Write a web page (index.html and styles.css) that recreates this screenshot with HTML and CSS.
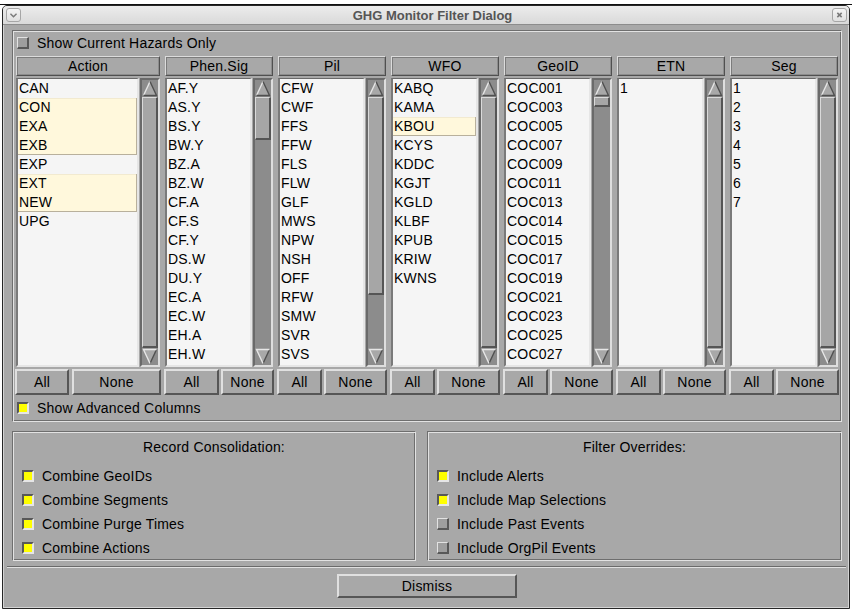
FILE: index.html
```html
<!DOCTYPE html>
<html>
<head>
<meta charset="utf-8">
<title>GHG Monitor Filter Dialog</title>
<link rel="stylesheet" href="styles.css">
</head>
<body>
<div class="screen-top"></div>
<div class="window">
  <div class="titlebar">
    <span class="tb-btn"><svg width="15" height="14" viewBox="0 0 15 14"><polyline points="4,5.5 7.5,9 11,5.5" fill="none" stroke="#7a7a7a" stroke-width="1.6"/></svg></span>
    <span class="title">GHG Monitor Filter Dialog</span>
    <span class="tb-btn"><svg width="15" height="14" viewBox="0 0 15 14"><path d="M5 4.5 L10 9.5 M10 4.5 L5 9.5" stroke="#7a7a7a" stroke-width="1.8"/></svg></span>
  </div>
  <div class="body">
    <div class="frame main-frame">
      <div class="check-row"><span class="cb"></span><span>Show Current Hazards Only</span></div>
      <div class="columns">
        <div class="col col-wide">
          <div class="col-head">Action</div>
          <div class="col-list">
            <div class="listbox">
              <div class="row">CAN</div>
              <div class="selgroup"><div class="row">CON</div><div class="row">EXA</div><div class="row">EXB</div></div>
              <div class="row">EXP</div>
              <div class="selgroup"><div class="row">EXT</div><div class="row">NEW</div></div>
              <div class="row">UPG</div>
            </div>
            <div class="scrollbar">
              <svg class="arrow" width="16" height="17" viewBox="0 0 16 17"><polygon points="8,1.5 14.5,15.5 1.5,15.5" fill="#a8a8a8"/><polyline points="1.5,15.5 8,1.5" fill="none" stroke="#e6e6e6" stroke-width="1.4"/><polyline points="8,1.5 14.5,15.5 1.5,15.5" fill="none" stroke="#505050" stroke-width="1.4"/></svg>
              <div class="trough"><div class="thumb full"></div></div>
              <svg class="arrow" width="16" height="17" viewBox="0 0 16 17"><polygon points="1.5,1.5 14.5,1.5 8,15.5" fill="#a8a8a8"/><polyline points="8,15.5 14.5,1.5" fill="none" stroke="#505050" stroke-width="1.4"/><polyline points="8,15.5 1.5,1.5 14.5,1.5" fill="none" stroke="#e6e6e6" stroke-width="1.4"/></svg>
            </div>
          </div>
          <div class="col-btns btns-wide"><button class="btn">All</button><button class="btn">None</button></div>
        </div>

        <div class="col">
          <div class="col-head">Phen.Sig</div>
          <div class="col-list">
            <div class="listbox">
              <div class="row">AF.Y</div><div class="row">AS.Y</div><div class="row">BS.Y</div><div class="row">BW.Y</div><div class="row">BZ.A</div><div class="row">BZ.W</div><div class="row">CF.A</div><div class="row">CF.S</div><div class="row">CF.Y</div><div class="row">DS.W</div><div class="row">DU.Y</div><div class="row">EC.A</div><div class="row">EC.W</div><div class="row">EH.A</div><div class="row">EH.W</div>
            </div>
            <div class="scrollbar">
              <svg class="arrow" width="16" height="17" viewBox="0 0 16 17"><polygon points="8,1.5 14.5,15.5 1.5,15.5" fill="#a8a8a8"/><polyline points="1.5,15.5 8,1.5" fill="none" stroke="#e6e6e6" stroke-width="1.4"/><polyline points="8,1.5 14.5,15.5 1.5,15.5" fill="none" stroke="#505050" stroke-width="1.4"/></svg>
              <div class="trough"><div class="thumb" style="height:43px"></div></div>
              <svg class="arrow" width="16" height="17" viewBox="0 0 16 17"><polygon points="1.5,1.5 14.5,1.5 8,15.5" fill="#a8a8a8"/><polyline points="8,15.5 14.5,1.5" fill="none" stroke="#505050" stroke-width="1.4"/><polyline points="8,15.5 1.5,1.5 14.5,1.5" fill="none" stroke="#e6e6e6" stroke-width="1.4"/></svg>
            </div>
          </div>
          <div class="col-btns btns-even"><button class="btn">All</button><button class="btn">None</button></div>
        </div>

        <div class="col">
          <div class="col-head">Pil</div>
          <div class="col-list">
            <div class="listbox">
              <div class="row">CFW</div><div class="row">CWF</div><div class="row">FFS</div><div class="row">FFW</div><div class="row">FLS</div><div class="row">FLW</div><div class="row">GLF</div><div class="row">MWS</div><div class="row">NPW</div><div class="row">NSH</div><div class="row">OFF</div><div class="row">RFW</div><div class="row">SMW</div><div class="row">SVR</div><div class="row">SVS</div>
            </div>
            <div class="scrollbar">
              <svg class="arrow" width="16" height="17" viewBox="0 0 16 17"><polygon points="8,1.5 14.5,15.5 1.5,15.5" fill="#a8a8a8"/><polyline points="1.5,15.5 8,1.5" fill="none" stroke="#e6e6e6" stroke-width="1.4"/><polyline points="8,1.5 14.5,15.5 1.5,15.5" fill="none" stroke="#505050" stroke-width="1.4"/></svg>
              <div class="trough"><div class="thumb" style="height:198px"></div></div>
              <svg class="arrow" width="16" height="17" viewBox="0 0 16 17"><polygon points="1.5,1.5 14.5,1.5 8,15.5" fill="#a8a8a8"/><polyline points="8,15.5 14.5,1.5" fill="none" stroke="#505050" stroke-width="1.4"/><polyline points="8,15.5 1.5,1.5 14.5,1.5" fill="none" stroke="#e6e6e6" stroke-width="1.4"/></svg>
            </div>
          </div>
          <div class="col-btns"><button class="btn">All</button><button class="btn">None</button></div>
        </div>

        <div class="col">
          <div class="col-head">WFO</div>
          <div class="col-list">
            <div class="listbox">
              <div class="row">KABQ</div><div class="row">KAMA</div>
              <div class="selgroup"><div class="row">KBOU</div></div>
              <div class="row">KCYS</div><div class="row">KDDC</div><div class="row">KGJT</div><div class="row">KGLD</div><div class="row">KLBF</div><div class="row">KPUB</div><div class="row">KRIW</div><div class="row">KWNS</div>
            </div>
            <div class="scrollbar">
              <svg class="arrow" width="16" height="17" viewBox="0 0 16 17"><polygon points="8,1.5 14.5,15.5 1.5,15.5" fill="#a8a8a8"/><polyline points="1.5,15.5 8,1.5" fill="none" stroke="#e6e6e6" stroke-width="1.4"/><polyline points="8,1.5 14.5,15.5 1.5,15.5" fill="none" stroke="#505050" stroke-width="1.4"/></svg>
              <div class="trough"><div class="thumb full"></div></div>
              <svg class="arrow" width="16" height="17" viewBox="0 0 16 17"><polygon points="1.5,1.5 14.5,1.5 8,15.5" fill="#a8a8a8"/><polyline points="8,15.5 14.5,1.5" fill="none" stroke="#505050" stroke-width="1.4"/><polyline points="8,15.5 1.5,1.5 14.5,1.5" fill="none" stroke="#e6e6e6" stroke-width="1.4"/></svg>
            </div>
          </div>
          <div class="col-btns"><button class="btn">All</button><button class="btn">None</button></div>
        </div>

        <div class="col">
          <div class="col-head">GeoID</div>
          <div class="col-list">
            <div class="listbox">
              <div class="row">COC001</div><div class="row">COC003</div><div class="row">COC005</div><div class="row">COC007</div><div class="row">COC009</div><div class="row">COC011</div><div class="row">COC013</div><div class="row">COC014</div><div class="row">COC015</div><div class="row">COC017</div><div class="row">COC019</div><div class="row">COC021</div><div class="row">COC023</div><div class="row">COC025</div><div class="row">COC027</div>
            </div>
            <div class="scrollbar">
              <svg class="arrow" width="16" height="17" viewBox="0 0 16 17"><polygon points="8,1.5 14.5,15.5 1.5,15.5" fill="#a8a8a8"/><polyline points="1.5,15.5 8,1.5" fill="none" stroke="#e6e6e6" stroke-width="1.4"/><polyline points="8,1.5 14.5,15.5 1.5,15.5" fill="none" stroke="#505050" stroke-width="1.4"/></svg>
              <div class="trough"><div class="thumb" style="height:10px"></div></div>
              <svg class="arrow" width="16" height="17" viewBox="0 0 16 17"><polygon points="1.5,1.5 14.5,1.5 8,15.5" fill="#a8a8a8"/><polyline points="8,15.5 14.5,1.5" fill="none" stroke="#505050" stroke-width="1.4"/><polyline points="8,15.5 1.5,1.5 14.5,1.5" fill="none" stroke="#e6e6e6" stroke-width="1.4"/></svg>
            </div>
          </div>
          <div class="col-btns"><button class="btn">All</button><button class="btn">None</button></div>
        </div>

        <div class="col">
          <div class="col-head">ETN</div>
          <div class="col-list">
            <div class="listbox">
              <div class="row">1</div>
            </div>
            <div class="scrollbar">
              <svg class="arrow" width="16" height="17" viewBox="0 0 16 17"><polygon points="8,1.5 14.5,15.5 1.5,15.5" fill="#a8a8a8"/><polyline points="1.5,15.5 8,1.5" fill="none" stroke="#e6e6e6" stroke-width="1.4"/><polyline points="8,1.5 14.5,15.5 1.5,15.5" fill="none" stroke="#505050" stroke-width="1.4"/></svg>
              <div class="trough"><div class="thumb full"></div></div>
              <svg class="arrow" width="16" height="17" viewBox="0 0 16 17"><polygon points="1.5,1.5 14.5,1.5 8,15.5" fill="#a8a8a8"/><polyline points="8,15.5 14.5,1.5" fill="none" stroke="#505050" stroke-width="1.4"/><polyline points="8,15.5 1.5,1.5 14.5,1.5" fill="none" stroke="#e6e6e6" stroke-width="1.4"/></svg>
            </div>
          </div>
          <div class="col-btns"><button class="btn">All</button><button class="btn">None</button></div>
        </div>

        <div class="col">
          <div class="col-head">Seg</div>
          <div class="col-list">
            <div class="listbox">
              <div class="row">1</div><div class="row">2</div><div class="row">3</div><div class="row">4</div><div class="row">5</div><div class="row">6</div><div class="row">7</div>
            </div>
            <div class="scrollbar">
              <svg class="arrow" width="16" height="17" viewBox="0 0 16 17"><polygon points="8,1.5 14.5,15.5 1.5,15.5" fill="#a8a8a8"/><polyline points="1.5,15.5 8,1.5" fill="none" stroke="#e6e6e6" stroke-width="1.4"/><polyline points="8,1.5 14.5,15.5 1.5,15.5" fill="none" stroke="#505050" stroke-width="1.4"/></svg>
              <div class="trough"><div class="thumb full"></div></div>
              <svg class="arrow" width="16" height="17" viewBox="0 0 16 17"><polygon points="1.5,1.5 14.5,1.5 8,15.5" fill="#a8a8a8"/><polyline points="8,15.5 14.5,1.5" fill="none" stroke="#505050" stroke-width="1.4"/><polyline points="8,15.5 1.5,1.5 14.5,1.5" fill="none" stroke="#e6e6e6" stroke-width="1.4"/></svg>
            </div>
          </div>
          <div class="col-btns"><button class="btn">All</button><button class="btn">None</button></div>
        </div>
      </div>
      <div class="check-row adv-row"><span class="cb on"></span><span>Show Advanced Columns</span></div>
    </div>

    <div class="panels">
      <div class="frame panel panel-left">
        <div class="panel-title">Record Consolidation:</div>
        <div class="opt"><span class="cb on"></span><span>Combine GeoIDs</span></div>
        <div class="opt"><span class="cb on"></span><span>Combine Segments</span></div>
        <div class="opt"><span class="cb on"></span><span>Combine Purge Times</span></div>
        <div class="opt"><span class="cb on"></span><span>Combine Actions</span></div>
      </div>
      <div class="frame panel panel-right">
        <div class="panel-title">Filter Overrides:</div>
        <div class="opt"><span class="cb on"></span><span>Include Alerts</span></div>
        <div class="opt"><span class="cb on"></span><span>Include Map Selections</span></div>
        <div class="opt"><span class="cb"></span><span>Include Past Events</span></div>
        <div class="opt"><span class="cb"></span><span>Include OrgPil Events</span></div>
      </div>
    </div>

    <div class="separator"></div>
    <div class="footer"><button class="btn dismiss">Dismiss</button></div>
  </div>
</div>
</body>
</html>
```

FILE: styles.css
```css
* { box-sizing: border-box; }

html, body {
  margin: 0;
  padding: 0;
}

body {
  width: 852px;
  height: 610px;
  overflow: hidden;
  background: #ffffff;
  font-family: "Liberation Sans", Arial, sans-serif;
  font-size: 14px;
  letter-spacing: 0.2px;
  color: #000;
}

.screen-top {
  height: 5px;
  background: #ffffff;
  border-bottom: 1px solid #111;
}

.window {
  margin-left: 2px;
  width: 848px;
  height: 604px;
  border: 1px solid #262626;
  border-radius: 5px 5px 0 0;
  background: #a8a8a8;
  display: flex;
  flex-direction: column;
  overflow: hidden;
}

.titlebar {
  height: 19px;
  flex: none;
  display: flex;
  align-items: center;
  padding: 0 2px 0 3px;
  background: linear-gradient(#ececec, #d9d9d9);
  border-bottom: 1px solid #8c8c8c;
}

.tb-btn {
  width: 15px;
  height: 14px;
  flex: none;
  border: 1px solid #a6a6a6;
  border-radius: 3px;
  background: linear-gradient(#f4f4f4, #e0e0e0);
  display: flex;
  align-items: center;
  justify-content: center;
}

.tb-btn svg { display: block; }

.title {
  flex: 1;
  text-align: center;
  padding-left: 12px;
  font-weight: bold;
  font-size: 13px;
  letter-spacing: 0;
  color: #555;
}

.body {
  flex: 1;
  padding: 5px 7px 0 9px;
  box-shadow: inset 1px 0 0 #d4d4d4, inset -1px 0 0 #d4d4d4, inset 0 -1px 0 #d4d4d4;
}

.frame {
  border: 1px solid;
  border-color: #6e6e6e #e2e2e2 #e2e2e2 #6e6e6e;
  box-shadow: inset 1px 1px 0 #e2e2e2, inset -1px -1px 0 #6e6e6e;
}

.main-frame {
  height: 392px;
  padding: 2px 3px 0 3px;
}

.check-row {
  height: 20px;
  display: flex;
  align-items: center;
  gap: 8px;
  margin-left: 1px;
  white-space: nowrap;
}

.adv-row { margin-top: 3px; }

.cb {
  width: 12px;
  height: 12px;
  flex: none;
  border-style: solid;
  border-width: 1px 2px 2px 1px;
  border-color: #e2e2e2 #585858 #585858 #e2e2e2;
  background: #9e9e9e;
}

.cb.on {
  border-width: 2px;
  border-color: #585858 #e6e6e6 #e6e6e6 #585858;
  background: #ffff00;
}

.columns {
  display: flex;
  gap: 5px;
  margin-top: 3px;
}

.col {
  width: 108px;
  display: flex;
  flex-direction: column;
}

.col-wide { width: 144px; }

.col-head {
  height: 20px;
  line-height: 18px;
  text-align: center;
  border: 1px solid;
  border-color: #dcdcdc #505050 #505050 #dcdcdc;
  box-shadow: inset 1px 1px 0 #7c7c7c, inset -1px -1px 0 #8c8c8c;
  background: #a8a8a8;
}

.col-list {
  height: 289px;
  margin-top: 2px;
  display: flex;
  gap: 1px;
}

.listbox {
  flex: 1;
  min-width: 0;
  border-style: solid;
  border-width: 1px 2px 2px 2px;
  border-color: #6a6a6a #e6e6e6 #e6e6e6 #7a7a7a;
  background: #f5f5f5;
  overflow: hidden;
}

.row {
  height: 19px;
  line-height: 19px;
  padding-left: 1px;
  white-space: nowrap;
}

.selgroup {
  background: #fff8dc;
  box-shadow: inset -1px -1px 0 #b8b09c, inset 0 1px 0 #f2ead0;
}

.scrollbar {
  width: 20px;
  flex: none;
  display: flex;
  flex-direction: column;
  border: 2px solid;
  border-color: #6a6a6a #dedede #dedede #6a6a6a;
  background: #8c8c8c;
}

.arrow {
  display: block;
  flex: none;
}

.trough {
  flex: 1;
  display: flex;
  flex-direction: column;
}

.thumb {
  flex: none;
  background: #a6a6a6;
  border-style: solid;
  border-width: 1px 2px 2px 1px;
  border-color: #dadada #555 #555 #dadada;
}

.thumb.full { flex: 1; }

.col-btns {
  height: 26px;
  margin: 2px -1px 0 -1px;
  display: grid;
  grid-template-columns: 45px 63px;
  gap: 2px;
}

.btns-wide {
  grid-template-columns: 54px 89px;
  gap: 3px;
}

.btns-even {
  grid-template-columns: 55px 53px;
}

.btn {
  margin: 0;
  padding: 0;
  height: 26px;
  font-family: "Liberation Sans", Arial, sans-serif;
  font-size: 14px;
  letter-spacing: 0.2px;
  color: #000;
  background: #a8a8a8;
  border: 2px solid;
  border-color: #e0e0e0 #565656 #565656 #e0e0e0;
}

.panels {
  display: flex;
  gap: 11px;
  margin-top: 9px;
}

.panel {
  height: 130px;
  padding: 6px 0 0 9px;
}

.panel-left { width: 404px; }
.panel-right { width: 415px; }

.panel-title {
  height: 18px;
  line-height: 18px;
  text-align: center;
  padding-right: 9px;
  margin-bottom: 8px;
}

.opt {
  height: 24px;
  display: flex;
  align-items: center;
  gap: 8px;
  white-space: nowrap;
}

.separator {
  height: 2px;
  margin: 5px -4px 0 -5px;
  border-top: 1px solid #6a6a6a;
  border-bottom: 1px solid #e0e0e0;
}

.footer {
  margin-top: 6px;
  display: flex;
  justify-content: center;
}

.dismiss {
  width: 180px;
  height: 24px;
}
```
